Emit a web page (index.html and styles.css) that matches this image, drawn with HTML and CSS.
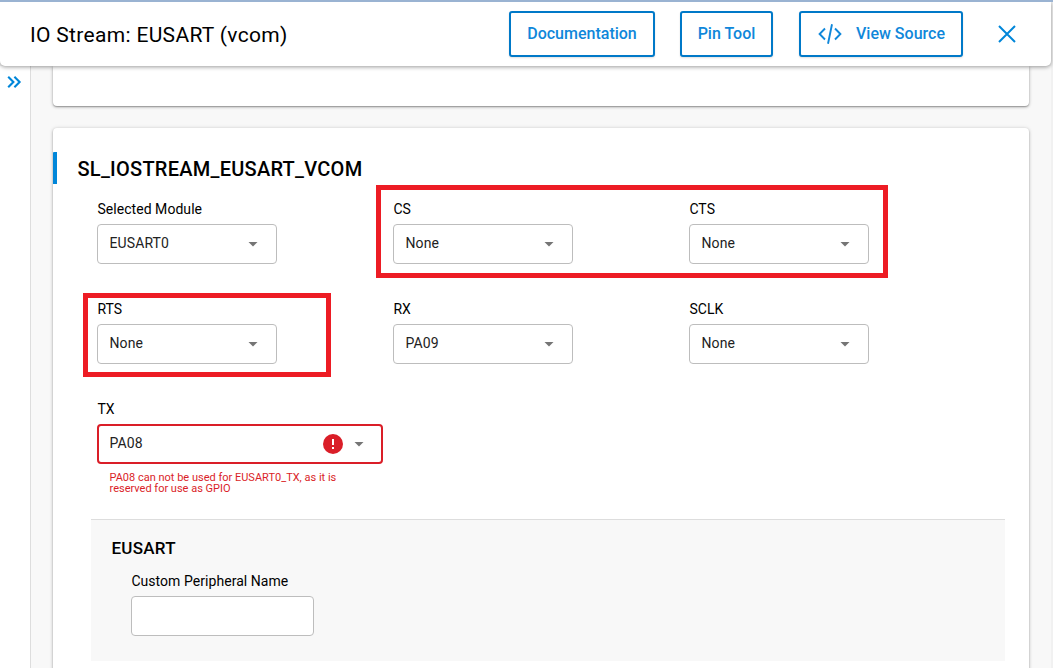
FILE: index.html
```
<!DOCTYPE html>
<html lang="en">
<head>
<meta charset="utf-8">
<title>IO Stream: EUSART (vcom)</title>
<link rel="stylesheet" href="styles.css">
</head>
<body>
<div class="app">
  <header class="header">
    <h1 class="header-title"><span>IO Stream: EUSART (vcom)</span></h1>
    <button class="btn btn-docs"><span>Documentation</span></button>
    <button class="btn btn-pin"><span>Pin Tool</span></button>
    <button class="btn btn-source">
      <svg width="24" height="22" viewBox="0 0 24 22" fill="none" stroke="currentColor" stroke-width="1.900"><path d="M7 5.500 1.600 11 7 16.500M17 5.500 22.400 11 17 16.500M14 1.200 10 20.800"/></svg>
      <span>View Source</span>
    </button>
    <button class="close" aria-label="Close">
      <svg width="18" height="18" viewBox="0 0 18 18" fill="none" stroke="currentColor" stroke-width="2"><path d="M1 1 17 17M17 1 1 17"/></svg>
    </button>
  </header>
  <div class="body">
    <aside class="sidebar">
      <svg width="15" height="12" viewBox="0 0 15 12" fill="none" stroke="currentColor" stroke-width="2.100"><path d="M1.200 .8 6.400 6 1.200 11.200M7.400 .8 12.600 6 7.400 11.200"/></svg>
    </aside>
    <main class="main">
      <section class="card card-previous"></section>
      <section class="card card-vcom">
        <h2 class="card-title"><span>SL_IOSTREAM_EUSART_VCOM</span></h2>
        <div class="fields">
          <div class="field"><label><span>Selected Module</span></label><div class="select"><span>EUSART0</span><i class="arrow"></i></div></div>
          <div class="field"><label><span>CS</span></label><div class="select"><span>None</span><i class="arrow"></i></div></div>
          <div class="field"><label><span>CTS</span></label><div class="select"><span>None</span><i class="arrow"></i></div></div>
          <div class="field"><label><span>RTS</span></label><div class="select"><span>None</span><i class="arrow"></i></div></div>
          <div class="field"><label><span>RX</span></label><div class="select"><span>PA09</span><i class="arrow"></i></div></div>
          <div class="field"><label><span>SCLK</span></label><div class="select"><span>None</span><i class="arrow"></i></div></div>
          <div class="field field-error"><label><span>TX</span></label>
            <div class="select"><span>PA08</span>
              <svg class="alert" width="20" height="20" viewBox="0 0 20 20"><circle cx="10" cy="10" r="10" fill="#da1e28"/><path d="M9 5h2v6H9zM9 13h2v2H9z" fill="#fff"/></svg>
              <i class="arrow"></i></div>
            <p class="error-text">PA08 can not be used for EUSART0_TX, as it is<br>reserved for use as GPIO</p>
          </div>
        </div>
        <div class="subsection">
          <h3 class="sub-title"><span>EUSART</span></h3>
          <div class="sub-field"><label><span>Custom Peripheral Name</span></label><input class="input" type="text"></div>
        </div>
      </section>
    </main>
  </div>
  <div class="highlight highlight-flow"></div>
  <div class="highlight highlight-rts"></div>
</div>
</body>
</html>
```
FILE: styles.css
```
* { box-sizing: border-box; }
body { margin: 0; font-family: Roboto, sans-serif; color: #000; overflow: hidden; }
h1, h2, h3, p { margin: 0; }
.app { position: relative; display: flex; flex-direction: column; width: 1053px; height: 668px; overflow: hidden; background: #f1f1f1; border-top: 2px solid #9ab3d2; }
.header { position: relative; z-index: 1; flex: none; display: flex; align-items: center; width: 1051px; height: 64px; padding: 0 35px 0 30px; background: #fff; border-radius: 0 0 5px 5px; box-shadow: 0 1px 4px rgba(0,0,0,.4); }
.header-title { flex: 1; padding-top: 1px; font-size: 21px; font-weight: 400; line-height: 26px; letter-spacing: .32px; }
.btn { display: flex; align-items: center; justify-content: center; height: 46px; padding: 0 0 1px; border: 2px solid #0079c8; border-radius: 3px; background: #fff; color: #0f87da; font: 500 16px/20px Roboto, sans-serif; box-shadow: 0 1px 2px rgba(0,0,0,.12); }
.btn-docs { width: 146px; }
.btn-pin { width: 93px; margin-left: 25px; }
.btn-source { width: 164px; margin-left: 26px; padding-left: 1px; gap: 14px; }
.close { display: flex; margin-left: 35px; padding: 0; border: 0; background: none; color: #0086d9; }
.body { flex: 1; display: flex; width: 1051px; min-height: 0; }
.sidebar { width: 31px; padding: 10px 0 0 7px; background: #fff; border-right: 1px solid #ddd; color: #0086d9; }
.sidebar svg { display: block; }
.main { flex: 1; padding: 0 22px; background: #f8f8f8; overflow: hidden; }
.card { background: #fff; border-radius: 4px; box-shadow: 0 1px 3px rgba(0,0,0,.3), 0 1px 1px rgba(0,0,0,.18), 0 0 5px rgba(0,0,0,.08); }
.card-previous { height: 40px; border-radius: 0 0 4px 4px; }
.card-vcom { height: 560px; margin-top: 22px; padding-top: 24px; }
.card-title { height: 32px; padding: 1px 0 0 20.5px; border-left: 4px solid #0086d9; border-radius: 1px 0 0 0; font-size: 20px; font-weight: 500; line-height: 32px; letter-spacing: .25px; }
.fields { display: grid; grid-template-columns: repeat(3, 296px); grid-auto-rows: 100px; padding: 14px 0 0 44px; }
.field label, .sub-field label { display: block; height: 26px; padding-left: .4px; font-size: 14px; line-height: 22px; letter-spacing: .05px; }
.select { display: flex; align-items: center; width: 180px; height: 40px; padding: 0 18px 2px 11.5px; border: 1px solid #bdbdbd; border-radius: 4px; background: #fff; color: #222; font-size: 14px; line-height: 20px; letter-spacing: .1px; }
.select span { margin-right: auto; }
.arrow { width: 10px; height: 5px; margin-top: 2px; background: #757575; clip-path: polygon(0 0, 100% 0, 50% 100%); }
.field-error .select { width: 286px; padding: 0 17px 2px 10.5px; border: 2px solid #da1e28; }
.alert { margin: 2px 11px 0 0; }
.error-text { padding: 8px 0 0 12.5px; color: #da1e28; font-size: 11px; line-height: 11px; letter-spacing: 0; white-space: nowrap; }
.subsection { height: 142px; margin: 21px 24px 0 38px; padding: 15px 20px 0; background: #f8f8f8; border-top: 1px solid #ddd; }
.sub-title { padding-left: .5px; font-size: 17px; font-weight: 500; line-height: 26px; letter-spacing: .25px; }
.sub-field { padding: 9px 0 0 20px; }
.input { display: block; width: 183px; height: 40px; padding: 0 12px; border: 1px solid #bdbdbd; border-radius: 4px; background: #fff; }
.highlight { position: absolute; z-index: 2; border: 5px solid #ed1c24; pointer-events: none; }
.highlight-flow { left: 376px; top: 183px; width: 512px; height: 93px; }
.highlight-rts { left: 83px; top: 291px; width: 248px; height: 84px; }
```
